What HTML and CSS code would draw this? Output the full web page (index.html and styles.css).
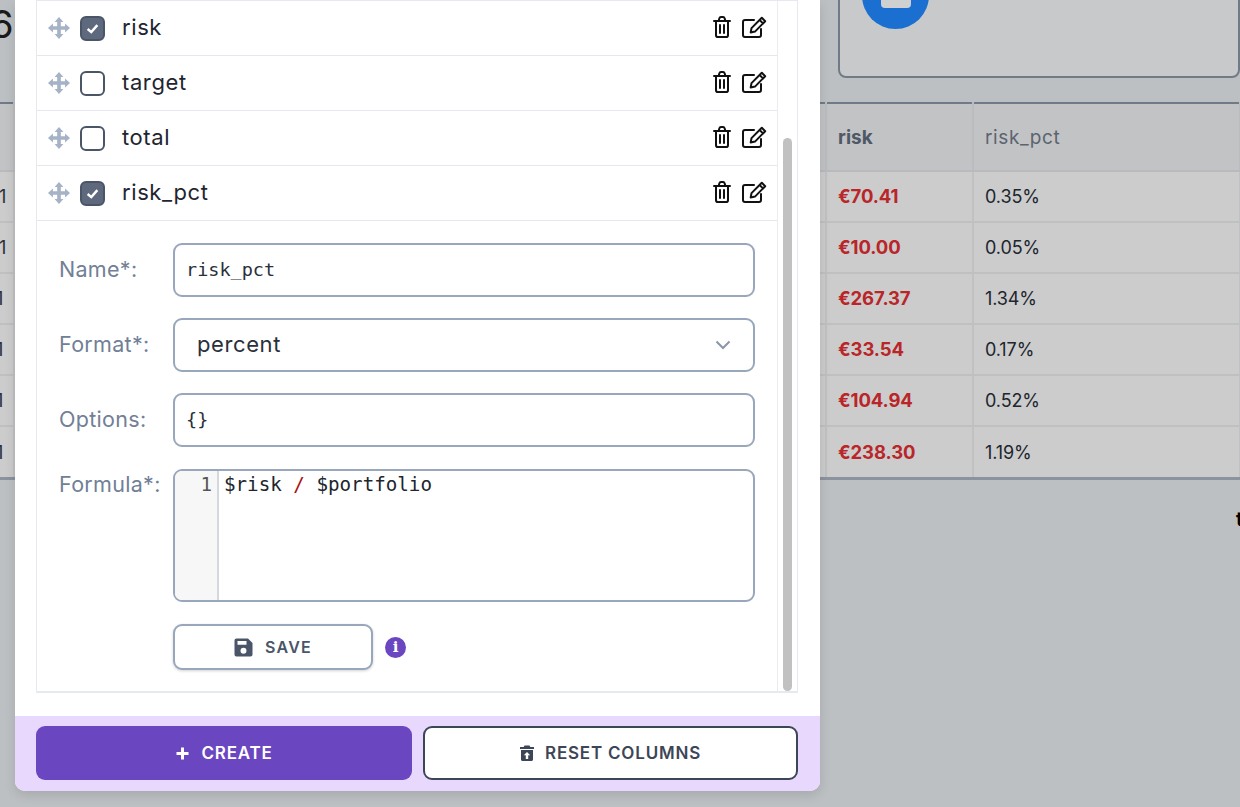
FILE: index.html
```html
<!DOCTYPE html>
<html lang="en">
<head>
<meta charset="utf-8">
<title>Columns</title>
<link rel="stylesheet" href="styles.css">
</head>
<body>
<svg class="defs" width="0" height="0" aria-hidden="true">
  <symbol id="i-move" viewBox="0 0 24 24">
    <path fill="currentColor" d="M12 0 16.800 5.400H14V10H18.600V7.200L24 12 18.600 16.800V14H14V18.600H16.800L12 24 7.200 18.600H10V14H5.400V16.800L0 12 5.400 7.200V10H10V5.400H7.200Z"/>
  </symbol>
  <symbol id="i-trash" viewBox="0 0 18 22">
    <path fill="none" stroke="currentColor" stroke-width="2" stroke-linejoin="round" stroke-linecap="round" d="M1 5H17M3 5V19.200C3 20.200 3.800 21 4.800 21H13.200C14.200 21 15 20.200 15 19.200V5M5.600 5 6.400 2.200C6.600 1.500 7.100 1 7.900 1H10.100C10.900 1 11.400 1.500 11.600 2.200L12.400 5M7 9V17M11 9V17"/>
  </symbol>
  <symbol id="i-edit" viewBox="0 0 25 22">
    <path fill="none" stroke="currentColor" stroke-width="2" stroke-linejoin="round" stroke-linecap="round" d="M19 13V19C19 20.100 18.100 21 17 21H3C1.900 21 1 20.100 1 19V6C1 4.900 1.900 4 3 4H12"/>
    <path fill="none" stroke="currentColor" stroke-width="2" stroke-linejoin="round" d="M19.800 1.800 23.200 5.200 13 15.600 8.700 16.500 9.500 12.100ZM17.600 4 21 7.400"/>
  </symbol>
</svg>

<div class="page">
  <header class="top">
    <h1 class="title">6</h1>
    <section class="card">
      <span class="badge"><span class="badge-mark"></span></span>
    </section>
  </header>

  <table class="grid">
    <colgroup>
      <col class="col-a"><col class="col-b"><col class="col-c"><col class="col-d">
    </colgroup>
    <thead>
      <tr><th></th><th></th><th class="strong">risk</th><th class="plain">risk_pct</th></tr>
    </thead>
    <tbody>
      <tr><td class="clip wide">21</td><td></td><td class="neg">€70.41</td><td>0.35%</td></tr>
      <tr><td class="clip wide">21</td><td></td><td class="neg">€10.00</td><td>0.05%</td></tr>
      <tr><td class="clip">1</td><td></td><td class="neg">€267.37</td><td>1.34%</td></tr>
      <tr><td class="clip">1</td><td></td><td class="neg">€33.54</td><td>0.17%</td></tr>
      <tr><td class="clip">1</td><td></td><td class="neg">€104.94</td><td>0.52%</td></tr>
      <tr><td class="clip">1</td><td></td><td class="neg">€238.30</td><td>1.19%</td></tr>
    </tbody>
  </table>

  <p class="pager">t</p>
</div>

<div class="modal">
  <div class="modal-body">
    <div class="list-box">
      <div class="list-main">
        <div class="row">
          <svg class="drag"><use href="#i-move"/></svg>
          <span class="check on"><svg viewBox="0 0 14 14"><path d="M3 7.400 6 10 11 4.200"/></svg></span>
          <span class="row-name">risk</span>
          <svg class="act-trash"><use href="#i-trash"/></svg>
          <svg class="act-edit"><use href="#i-edit"/></svg>
        </div>
        <div class="row">
          <svg class="drag"><use href="#i-move"/></svg>
          <span class="check"></span>
          <span class="row-name">target</span>
          <svg class="act-trash"><use href="#i-trash"/></svg>
          <svg class="act-edit"><use href="#i-edit"/></svg>
        </div>
        <div class="row">
          <svg class="drag"><use href="#i-move"/></svg>
          <span class="check"></span>
          <span class="row-name">total</span>
          <svg class="act-trash"><use href="#i-trash"/></svg>
          <svg class="act-edit"><use href="#i-edit"/></svg>
        </div>
        <div class="row">
          <svg class="drag"><use href="#i-move"/></svg>
          <span class="check on"><svg viewBox="0 0 14 14"><path d="M3 7.400 6 10 11 4.200"/></svg></span>
          <span class="row-name">risk_pct</span>
          <svg class="act-trash"><use href="#i-trash"/></svg>
          <svg class="act-edit"><use href="#i-edit"/></svg>
        </div>

        <form class="form">
          <label class="label">Name*:</label>
          <div class="field mono-field">risk_pct</div>

          <label class="label">Format*:</label>
          <div class="field select-field">
            <span class="select-value">percent</span>
            <svg class="chev" viewBox="0 0 16 10"><path d="M1.500 1.500 8 8 14.500 1.500"/></svg>
          </div>

          <label class="label">Options:</label>
          <div class="field mono-field">{}</div>

          <label class="label label-top">Formula*:</label>
          <div class="editor">
            <div class="gutter">1</div>
            <div class="code">$risk <span class="op">/</span> $portfolio</div>
          </div>

          <div class="save-row">
            <button class="btn-save" type="button">
              <svg class="save-icon" viewBox="0 0 19 19"><path fill="currentColor" fill-rule="evenodd" d="M2.500 0.500H14L18.500 5V16.500C18.500 17.600 17.600 18.500 16.500 18.500H2.500C1.400 18.500 0.500 17.600 0.500 16.500V2.500C0.500 1.400 1.400 0.500 2.500 0.500ZM3.500 3V6.800H12.500V3ZM9.500 9.800A3 3 0 1 0 9.500 15.800 3 3 0 1 0 9.500 9.800Z"/></svg>
              SAVE
            </button>
            <span class="info">i</span>
          </div>
        </form>
      </div>
      <div class="scroll"><div class="thumb"></div></div>
    </div>
  </div>

  <footer class="modal-foot">
    <button class="btn btn-create" type="button">
      <svg class="plus" viewBox="0 0 15 15"><path d="M7.500 1.500V13.500M1.500 7.500H13.500"/></svg>
      CREATE
    </button>
    <button class="btn btn-reset" type="button">
      <svg class="reset-icon" viewBox="0 0 14 16"><path fill="currentColor" fill-rule="evenodd" d="M4.500 0.500H9.500L10.300 2H14V4H0V2H3.700ZM1 5H13V14.500C13 15.300 12.300 16 11.500 16H2.500C1.700 16 1 15.300 1 14.500ZM7 7 3.800 10.300H5.800V14H8.200V10.300H10.200Z"/></svg>
      RESET COLUMNS
    </button>
  </footer>
</div>
</body>
</html>
```

FILE: styles.css
```css
* { box-sizing: border-box; }

html, body {
  margin: 0;
  height: 100%;
}

body {
  position: relative;
  width: 1240px;
  height: 807px;
  overflow: hidden;
  background: #bcc0c3;
  font-family: Inter, "Liberation Sans", sans-serif;
  color: #1a202c;
}

.defs { position: absolute; }

/* page behind the dialog */
.page {
  height: 807px;
  overflow: hidden;
}

.top {
  display: flex;
  height: 102px;
  align-items: flex-start;
}

.title {
  margin: 2px 0 0 -10px;
  font-size: 38px;
  line-height: 44px;
  font-weight: 400;
  color: #1a1a1a;
}

.card {
  margin-left: auto;
  width: 402px;
  height: 118px;
  margin-top: -40px;
  padding-left: 22px;
  border: 2px solid #717b88;
  border-radius: 8px;
  background: #c8c9cb;
}

.badge {
  display: flex;
  width: 67px;
  height: 67px;
  border-radius: 50%;
  background: #1a6fd1;
  align-items: center;
  justify-content: center;
}

.badge-mark {
  display: block;
  width: 30px;
  height: 24px;
  border-radius: 4px;
  background: #cfd0d2;
}

.grid {
  width: 1240px;
  table-layout: fixed;
  border-collapse: collapse;
  border-top: 2px solid #717b88;
  border-bottom: 3px solid #8a939e;
  background: #cccccc;
  font-size: 18px;
}

.col-a { width: 14px; }
.col-b { width: 812px; }
.col-c { width: 147px; }
.col-d { width: 267px; }

.grid th {
  height: 68px;
  padding: 0 11px;
  text-align: left;
  background: #c2c3c5;
  border-right: 2px solid #babcbf;
  border-bottom: 2px solid #b9babd;
  color: #4f5866;
  font-size: 19px;
}

.grid th.strong { font-weight: 700; }
.grid th.plain { font-weight: 400; letter-spacing: 0.6px; color: #5c6470; }

.grid td {
  height: 51px;
  padding: 0 11px;
  border-right: 2px solid #c0c1c3;
  border-bottom: 2px solid #bfc0c2;
  font-size: 18px;
  color: #20252e;
  letter-spacing: -0.1px;
}

.grid tbody tr:last-child td {
  border-bottom: 0;
  height: 52px;
  padding-top: 2px;
}

.grid td.clip {
  padding: 0;
  overflow: hidden;
  white-space: nowrap;
  color: #2a2f38;
  text-indent: -4px;
}

.grid td.clip.wide { text-indent: -12px; }

.grid td.neg {
  padding-bottom: 2px;
  color: #b92528;
  font-weight: 700;
  font-size: 18.500px;
}

.pager {
  margin: 27px 0 0 1236px;
  font-size: 20px;
  line-height: 24px;
  font-weight: 700;
  color: #000;
}

/* dialog */
.modal {
  position: absolute;
  left: 15px;
  top: 0;
  bottom: 16px;
  width: 805px;
  display: flex;
  flex-direction: column;
  background: #fff;
  border-radius: 0 0 10px 10px;
  box-shadow: 0 4px 12px rgba(0, 0, 0, 0.12);
  overflow: hidden;
}

.modal-body {
  flex: 1;
  padding: 0 22px 23px 21px;
  min-height: 0;
}

.list-box {
  display: flex;
  height: 693px;
  border: 1px solid #e6eaf0;
  border-width: 1px 1px 2px 1px;
}

.list-main {
  width: 741px;
  border-right: 1px solid #e9edf2;
}

.row {
  display: flex;
  align-items: center;
  height: 55px;
  padding: 0 10px 0 11px;
  border-bottom: 1px solid #e4e8ee;
}

.drag {
  width: 22px;
  height: 22px;
  color: #a6b3c6;
  flex: none;
}

.check {
  display: flex;
  align-items: center;
  justify-content: center;
  width: 25px;
  height: 25px;
  margin-left: 10px;
  border: 2px solid #4a5568;
  border-radius: 6px;
  flex: none;
  background: #fff;
}

.check.on { background: #5e697d; }

.check svg {
  width: 17px;
  height: 17px;
  fill: none;
  stroke: #fff;
  stroke-width: 2;
}

.row-name {
  margin: 0 0 2px 17px;
  flex: 1;
  font-size: 22px;
  line-height: 30px;
  color: #1f2530;
  letter-spacing: 0.6px;
}

.act-trash {
  width: 18px;
  height: 22px;
  margin-bottom: 2px;
  color: #111;
  flex: none;
}

.act-edit {
  width: 25px;
  height: 22px;
  margin: 0 0 2px 11px;
  color: #111;
  flex: none;
}

.form {
  display: grid;
  grid-template-columns: 114px 582px;
  row-gap: 21px;
  padding: 22px 0 0 22px;
  align-items: center;
}

.label {
  margin-bottom: 2px;
  font-size: 21.500px;
  line-height: 30px;
  letter-spacing: 0.3px;
  color: #718096;
}

.label-top {
  align-self: start;
  margin: 1px 0 0;
}

.field {
  height: 54px;
  border: 2px solid #98a7bb;
  border-radius: 9px;
  display: flex;
  align-items: center;
  background: #fff;
}

.mono-field {
  padding: 0 0 2px 11px;
  font-family: "DejaVu Sans Mono", "Liberation Mono", monospace;
  font-size: 18.500px;
  color: #2a303a;
}

.select-field {
  padding: 0 22px;
  justify-content: space-between;
  font-size: 22px;
  color: #2a303a;
  letter-spacing: 0.6px;
}

.select-value {
  margin-bottom: 2px;
}

.chev {
  width: 16px;
  height: 10px;
  fill: none;
  stroke: #8a96a8;
  stroke-width: 2;
}

.editor {
  display: flex;
  height: 133px;
  border: 2px solid #98a7bb;
  border-radius: 9px;
  overflow: hidden;
  margin-top: 1px;
}

.gutter {
  width: 44px;
  padding: 1px 5px 0 0;
  text-align: right;
  background: #f7f7f7;
  border-right: 2px solid #d4d9e0;
  font-family: "DejaVu Sans Mono", "Liberation Mono", monospace;
  font-size: 19.200px;
  line-height: 26px;
  color: #555;
}

.code {
  padding: 1px 0 0 5px;
  font-family: "DejaVu Sans Mono", "Liberation Mono", monospace;
  font-size: 19.200px;
  line-height: 26px;
  color: #20252e;
}

.op { color: #a11; }

.save-row {
  grid-column: 2;
  display: flex;
  align-items: center;
  gap: 12px;
  margin-top: 1px;
}

.btn-save {
  display: flex;
  align-items: center;
  justify-content: center;
  gap: 12px;
  width: 200px;
  height: 46px;
  padding: 0;
  border: 2px solid #98a7bb;
  border-radius: 9px;
  background: #fff;
  box-shadow: 0 1px 3px rgba(0, 0, 0, 0.18);
  font-family: inherit;
  font-size: 16px;
  font-weight: 600;
  letter-spacing: 1.200px;
  color: #4a5568;
}

.save-icon {
  width: 19px;
  height: 19px;
  color: #4a5568;
}

.info {
  display: flex;
  align-items: center;
  justify-content: center;
  width: 21px;
  height: 21px;
  border-radius: 50%;
  background: #6b46c1;
  color: #fff;
  font-family: "DejaVu Serif", serif;
  font-size: 15px;
  font-weight: 700;
}

.scroll {
  width: 18px;
  padding: 137px 4px 0 5px;
}

.thumb {
  height: 553px;
  border-radius: 5px;
  background: #c1c1c1;
}

.modal-foot {
  display: grid;
  grid-template-columns: 376px 375px;
  gap: 11px;
  height: 75px;
  padding: 10px 22px 11px 21px;
  background: #e9d8fd;
}

.btn {
  display: flex;
  align-items: center;
  justify-content: center;
  gap: 11px;
  height: 54px;
  padding: 0;
  border-radius: 9px;
  font-family: inherit;
  font-size: 17px;
  font-weight: 600;
  letter-spacing: 0.800px;
}

.btn-create {
  border: 0;
  background: #6b46c1;
  color: #fff;
}

.plus {
  width: 15px;
  height: 15px;
  fill: none;
  stroke: #fff;
  stroke-width: 3;
}

.btn-reset {
  border: 2px solid #3d4656;
  background: #fff;
  color: #3d4656;
}

.reset-icon {
  width: 14px;
  height: 16px;
  color: #3d4656;
}
```
